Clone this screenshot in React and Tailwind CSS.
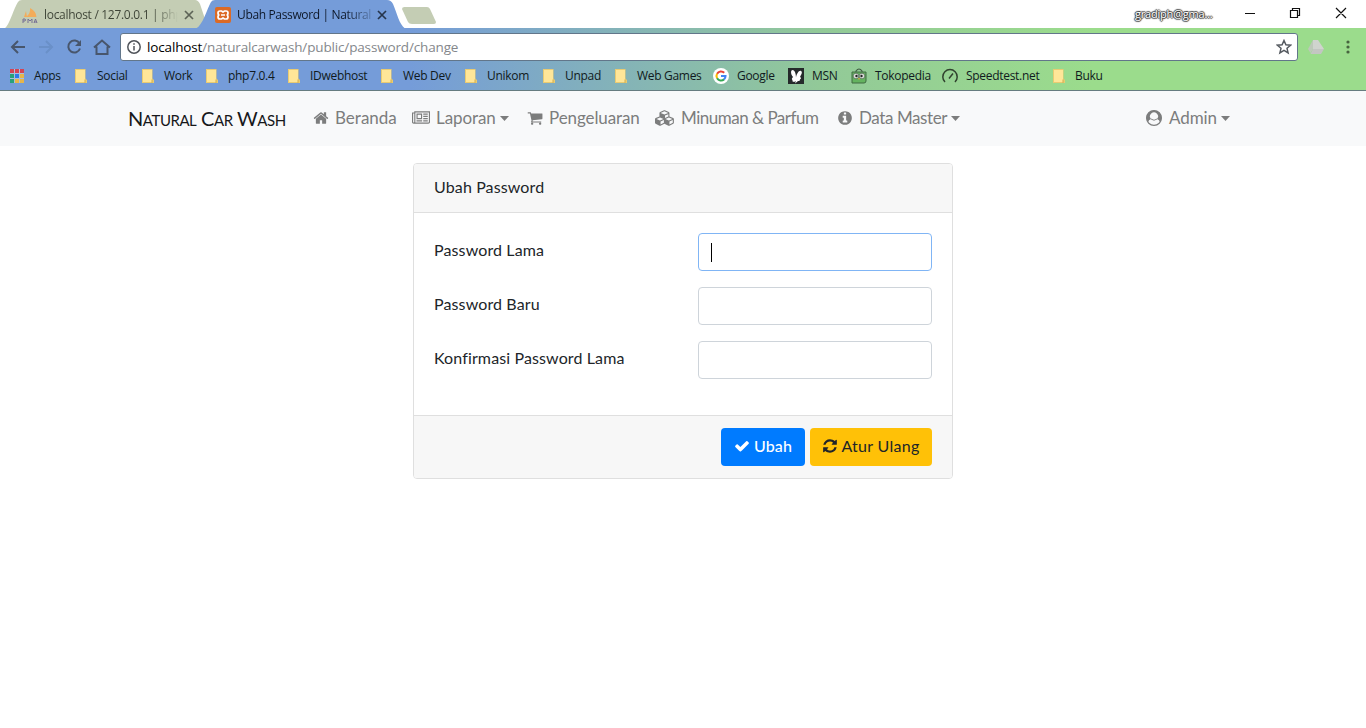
import React from "react";

const HOME = "M1472 992v480q0 26-19 45t-45 19h-384v-384h-256v384h-384q-26 0-45-19t-19-45v-480q0-1 .5-3t.5-3l575-474 575 474q1 2 1 6zm223-69l-62 74q-8 9-21 11h-3q-13 0-21-7l-692-577-692 577q-12 8-24 7-13-2-21-11l-62-74q-8-10-7-23.5t11-21.5l719-599q32-26 76-26t76 26l244 204v-195q0-14 9-23t23-9h192q14 0 23 9t9 23v408l219 182q10 8 11 21.5t-7 23.5z";
const NEWS = "M1024 512h-384v384h384v-384zm128 640v128h-640v-128h640zm0-768v640h-640v-640h640zm640 768v128h-512v-128h512zm0-256v128h-512v-128h512zm0-256v128h-512v-128h512zm0-256v128h-512v-128h512zm-1536 960v-960h-128v960q0 26 19 45t45 19 45-19 19-45zm1664 0v-1088h-1536v1088q0 33-11 64h1483q26 0 45-19t19-45zm128-1216v1216q0 80-56 136t-136 56h-1664q-80 0-136-56t-56-136v-1088h256v-128h1792z";
const CART = "M704 1536q0 52-38 90t-90 38-90-38-38-90 38-90 90-38 90 38 38 90zm896 0q0 52-38 90t-90 38-90-38-38-90 38-90 90-38 90 38 38 90zm128-1088v512q0 24-16.5 42.5t-40.5 21.5l-1044 122q13 60 13 70 0 16-24 64h920q26 0 45 19t19 45-19 45-45 19h-1024q-26 0-45-19t-19-45q0-11 8-31.5t16-36 21.5-40 15.5-29.5l-177-823h-204q-26 0-45-19t-19-45 19-45 45-19h256q16 0 28.5 6.5t19.5 15.5 13 24.5 8 26 5.5 29.5 4.5 26h1201q26 0 45 19t19 45z";
const CUBES = "M640 1632l384-192v-314l-384 164v342zm-64-454l404-173-404-173-404 173zm1088 454l384-192v-314l-384 164v342zm-64-454l404-173-404-173-404 173zm-448-293l384-165v-266l-384 164v267zm-64-379l441-189-441-189-441 189zm1088 518v416q0 36-19 67t-52 47l-448 224q-25 14-57 14t-57-14l-448-224q-4-2-7-4-2 2-7 4l-448 224q-25 14-57 14t-57-14l-448-224q-33-16-52-47t-19-67v-416q0-38 21.5-70t56.5-48l434-186v-400q0-38 21.5-70t56.5-48l448-192q23-10 50-10t50 10l448 192q35 16 56.5 48t21.5 70v400l434 186q36 16 57 48t21 70z";
const INFO = "M1152 1376v-160q0-14-9-23t-23-9h-96v-512q0-14-9-23t-23-9h-320q-14 0-23 9t-9 23v160q0 14 9 23t23 9h96v320h-96q-14 0-23 9t-9 23v160q0 14 9 23t23 9h448q14 0 23-9t9-23zm-128-896v-160q0-14-9-23t-23-9h-192q-14 0-23 9t-9 23v160q0 14 9 23t23 9h192q14 0 23-9t9-23zm640 416q0 209-103 385.5t-279.5 279.5-385.5 103-385.5-103-279.5-279.5-103-385.5 103-385.5 279.5-279.5 385.5-103 385.5 103 279.5 279.5 103 385.5z";
const CHECK = "M1671 566q0 40-28 68l-724 724-136 136q-28 28-68 28t-68-28l-136-136-362-362q-28-28-28-68t28-68l136-136q28-28 68-28t68 28l294 295 656-657q28-28 68-28t68 28l136 136q28 28 28 68z";
const REFRESH = "M1639 1056q0 5-1 7-64 268-268 434.5t-478 166.5q-146 0-282.5-55t-243.5-157l-129 129q-19 19-45 19t-45-19-19-45v-448q0-26 19-45t45-19h448q26 0 45 19t19 45-19 45l-137 137q71 66 161 102t187 36q134 0 250-65t186-179q11-17 53-117 8-23 30-23h192q13 0 22.5 9.5t9.5 22.5zm25-800v448q0 26-19 45t-45 19h-448q-26 0-45-19t-19-45 19-45l138-138q-148-137-349-137-134 0-250 65t-186 179q-11 17-53 117-8 23-30 23h-199q-13 0-22.5-9.5t-9.5-22.5v-7q65-268 270-434.5t480-166.5q146 0 284 55.5t245 156.5l130-129q19-19 45-19t45 19 19 45z";

function Glyph({ d, w = 1792, className = "" }) {
  return (
    <svg viewBox={`0 0 ${w} 1792`} className={`shrink-0 ${className}`} fill="currentColor">
      <path d={d} />
    </svg>
  );
}

function Caret() {
  return (
    <svg viewBox="0 0 10 5" className="ml-[4px] h-[5px] w-[9px] shrink-0" preserveAspectRatio="none" fill="currentColor">
      <path d="M0 0h10L5 5z" />
    </svg>
  );
}

function Close({ className }) {
  return (
    <svg viewBox="0 0 10 10" className={`h-[10px] w-[10px] shrink-0 ${className}`} fill="none" stroke="currentColor" strokeWidth="1.7">
      <path d="M1 1l8 8M9 1l-8 8" />
    </svg>
  );
}

function TabStrip() {
  return (
    <div className="relative h-7 bg-white text-[12px]">
      <svg className="absolute left-0 top-0" width="450" height="29" viewBox="0 0 450 29">
        <path d="M5 28C9 26 14 8 18 2Q19 0 22 0H195Q198 0 200 4L208 28Z" fill="#c4cdb4" />
        <path d="M196 28.500C203 25 207 9 211 2Q212 0 215 0H387Q391 0 393 4C397 13 399 24 405 28.500Z" fill="#759cd9" />
        <path d="M404.500 7H427Q429 7 430 9L436 22Q436 24 434 24H412Q409 24 408 22L402 9Q402 7 404.500 7Z" fill="#c4cdb4" />
      </svg>
      <div className="relative flex h-7 items-center">
        <svg viewBox="0 0 18 16" className="ml-[21px] mt-1 h-4 w-[18px] shrink-0">
          <path d="M9 0Q10 5 5 9L15.500 9Q15 3 9 0M5 3L3 9H6Z" fill="#f3ac5a" />
          <path d="M2 15v-4h2q1 1 0 2H2M7 15v-4l2 2 2-2v4M13 15l1.500-4 1.500 4M13 14h3" fill="none" stroke="#777095" strokeWidth="1" />
        </svg>
        <div className="ml-[5px] mt-[2px] w-[134px] whitespace-nowrap bg-gradient-to-r from-[#3d4336] from-80% to-[#c4cdb4] to-100% bg-clip-text tracking-[-0.3px] text-transparent">localhost / 127.0.0.1 | php</div>
        <Close className="ml-[6px] mt-[2px] text-[#5d6357]" />
        <svg viewBox="0 0 16 16" className="ml-[21px] mt-[2px] h-4 w-4 shrink-0">
          <rect width="16" height="16" rx="2" fill="#dc6a25" />
          <path d="M5 4h1.500L8 5l1.500-1H11Q13 4 13 6T11.500 8Q13 8 13 10T11 12H9.500L8 11 6.500 12H5Q3 12 3 10T4.500 8Q3 8 3 6T5 4ZM6 8h4" fill="none" stroke="#fff" strokeWidth="1.700" />
        </svg>
        <div className="ml-[6px] mt-[2px] w-[134px] whitespace-nowrap bg-gradient-to-r from-[#0d1728] from-80% to-[#759cd9] to-105% bg-clip-text tracking-[-0.35px] text-transparent">Ubah Password | Natural</div>
        <Close className="ml-[6px] mt-[2px] text-[#26354c]" />
        <div className="ml-[748px] w-[81px] whitespace-nowrap text-[11px] tracking-[-0.2px] text-white [text-shadow:-1px_0_1px_#333,1px_0_1px_#333,0_-1px_1px_#333,0_1px_1px_#333]">gradiph@gma...</div>
        <svg viewBox="0 0 104 12" className="-mt-[2px] ml-[29px] h-3 w-[104px] shrink-0" fill="none" stroke="#111" strokeWidth="1.200">
          <path d="M0 6.500h10M45.500 3.500h7v7h-7zM47.500 3.500v-2h7v7h-2M91 1l10 10M101 1l-10 10" />
        </svg>
      </div>
    </div>
  );
}

function Toolbar() {
  return (
    <div className="flex h-[34px] items-center pt-[3px] text-[#48566c]">
      <svg viewBox="0 0 112 18" className="ml-2 h-[18px] w-[112px] shrink-0" fill="none" stroke="currentColor" strokeWidth="2">
        <path d="M17 9H4M10 3L4 9l6 6" />
        <path d="M31 9h13M38 3l6 6-6 6" stroke="#6a90c8" />
        <path d="M71.500 5.500A6 6 0 1 0 72 10.500" />
        <path d="M73 2v6h-6z" fill="currentColor" stroke="none" />
        <path d="M86 9.500L94 2.500l8 7M88.500 8.500V16h11V8.500" />
      </svg>
      <div className="flex h-7 w-[1178px] items-center rounded-[3px] border border-[#62768a] bg-white">
        <svg viewBox="0 0 14 14" className="ml-[6px] h-[14px] w-[14px] shrink-0" fill="none" stroke="#50545a" strokeWidth="1.500">
          <circle cx="7" cy="7" r="6.200" />
          <path d="M7 6v4.500M7 3.200v1.600" />
        </svg>
        <div className="ml-[6px] mt-px flex-1 whitespace-nowrap text-[13.500px] tracking-[-0.150px] text-[#84878b]"><span className="text-black">localhost</span>/naturalcarwash/public/password/change</div>
        <svg viewBox="0 0 16 16" className="mr-[5px] h-4 w-4 shrink-0" fill="none" stroke="#555a60" strokeWidth="1.500">
          <path d="M8 1.500l1.900 4.300 4.700.4-3.600 3.100 1.100 4.600L8 11.400l-4.100 2.500L5 9.300 1.400 6.200l4.700-.4z" />
        </svg>
      </div>
      <svg viewBox="0 0 16 14" className="ml-[10px] h-[14px] w-4 shrink-0">
        <path d="M5 0h5L5 9 2.500 13 0 9z" fill="#bdc9b9" />
        <path d="M5 0h5l6 9H5z" fill="#d0d4ce" />
        <path d="M5 9h11l-3 5H2.500z" fill="#c3c6c2" />
      </svg>
      <svg viewBox="0 0 4 14" className="ml-[22px] h-[14px] w-1 shrink-0" fill="#47643f">
        <circle cx="2" cy="2" r="1.600" /><circle cx="2" cy="7" r="1.600" /><circle cx="2" cy="12" r="1.600" />
      </svg>
    </div>
  );
}

const ICONS = {
  apps: (
    <svg viewBox="0 0 14 14" className="h-[14px] w-[14px]">
      <path d="M0 0h4v4H0zM5 0h4v4H5zM10 0h4v4h-4z" fill="#d34456" />
      <path d="M0 5h4v4H0z" fill="#28a27a" /><path d="M5 5h4v4H5z" fill="#2e7be8" /><path d="M10 5h4v4h-4z" fill="#e6b54b" />
      <path d="M0 10h4v4H0z" fill="#28a27a" /><path d="M5 10h4v4H5zM10 10h4v4h-4z" fill="#e6b54b" />
      <path d="M4.500 0v14M9.500 0v14M0 4.500h14M0 9.500h14" stroke="#a9bfdc" />
    </svg>
  ),
  folder: (
    <svg viewBox="0 0 12 14" className="h-[14px] w-3">
      <path d="M0 0h10.500v9.500L12 11v3H0z" fill="#e9cb72" />
      <path d="M1 1h9v12H1z" fill="#ffe698" />
      <path d="M10 14v-3.500" stroke="#d2af52" />
    </svg>
  ),
  google: (
    <svg viewBox="0 0 16 16" className="h-4 w-4" fill="none" strokeWidth="2.100">
      <circle cx="8" cy="8" r="8" fill="#fff" />
      <path d="M11.200 4.800A4.500 4.500 0 0 0 4.100 5.800" stroke="#e94235" />
      <path d="M4.100 5.800A4.500 4.500 0 0 0 4.100 10.300" stroke="#fbbb05" />
      <path d="M4.100 10.300A4.500 4.500 0 0 0 11 11.400" stroke="#34a853" />
      <path d="M11 11.400A4.500 4.500 0 0 0 12.500 8H8" stroke="#4285f4" />
    </svg>
  ),
  msn: (
    <svg viewBox="0 0 16 16" className="h-4 w-4">
      <rect width="16" height="16" fill="#252a2b" />
      <path d="M8 13C6 14.500 4 14 4.500 12Q3 11 5 9C2.500 6 2.500 2 4.500 2S8 5 8 9.500C8.500 6 11 2 13 3S13 7 12 9Q14 10 12 11.500Q12 13.500 10 13L7 15.500Z" fill="#fff" />
    </svg>
  ),
  toko: (
    <svg viewBox="0 0 16 16" className="h-4 w-4">
      <path d="M5 4V3Q8-1 11 3v1" fill="none" stroke="#415b43" strokeWidth="1.200" />
      <path d="M1 4h14v9q0 2-2 2H1z" fill="#64b35f" stroke="#416b42" />
      <circle cx="5" cy="8" r="2.800" fill="#dce2da" stroke="#405343" strokeWidth=".6" /><circle cx="11" cy="8" r="2.800" fill="#dce2da" stroke="#405343" strokeWidth=".6" />
      <circle cx="5.500" cy="8" r="1.200" fill="#222" /><circle cx="10.500" cy="8" r="1.200" fill="#222" />
      <path d="M7 10h2l-1 2z" fill="#d9a43c" />
    </svg>
  ),
  speed: (
    <svg viewBox="0 0 16 16" className="h-4 w-4" fill="none" stroke="#30422e" strokeWidth="1.500">
      <path d="M3 14A7.200 7.200 0 1 1 13 14M7 10.500l4-5" />
    </svg>
  ),
};

const BOOKMARKS = [
  ["apps", "Apps", "ml-[10px] w-[24px]", "w-[41px]"],
  ["folder", "Social", "w-[22px]", "w-[45px]"],
  ["folder", "Work", "w-[22px]", "w-[42px]"],
  ["folder", "php7.0.4", "w-[22px]", "w-[60px]"],
  ["folder", "IDwebhost", "w-[22px]", "w-[71px]"],
  ["folder", "Web Dev", "w-[22px]", "w-[62px]"],
  ["folder", "Unikom", "w-[22px]", "w-[56px]"],
  ["folder", "Unpad", "w-[22px]", "w-[50px]"],
  ["folder", "Web Games", "w-[22px]", "w-[76px]"],
  ["google", "Google", "w-[24px]", "w-[51px]"],
  ["msn", "MSN", "w-[24px]", "w-[39px]"],
  ["toko", "Tokopedia", "w-[24px]", "w-[67px]"],
  ["speed", "Speedtest.net", "w-[24px]", "w-[87px]"],
  ["folder", "Buku", "w-[22px]", "w-[40px]"],
];

function Bookmarks() {
  return (
    <div className="flex h-[29px] items-center border-b border-[#667c80] text-[12px] text-[#101a20]">
      {BOOKMARKS.map(([icon, label, iconWidth, labelWidth]) => (
        <React.Fragment key={label}>
          <span className={`shrink-0 ${iconWidth}`}>{ICONS[icon]}</span>
          <span className={`shrink-0 whitespace-nowrap tracking-[-0.3px] ${labelWidth}`}>{label}</span>
        </React.Fragment>
      ))}
    </div>
  );
}

function NavItem({ icon, label, caret, className }) {
  return (
    <a className={`flex shrink-0 items-center whitespace-nowrap ${className}`}>
      {icon}
      <span className="ml-[6px]">{label}</span>
      {caret && <Caret />}
    </a>
  );
}

function Navbar() {
  return (
    <nav className="flex h-[55px] items-center bg-[#f8f9fa] pb-px pl-32 text-[17px] text-[#7c7d7d]">
      <a className="w-[185px] shrink-0 whitespace-nowrap text-[20px] tracking-[-0.45px] text-[#17181a]">
        N<span className="text-[15px]">ATURAL</span> C<span className="text-[15px]">AR</span> W<span className="text-[15px]">ASH</span>
      </a>
      <NavItem className="w-[99px]" icon={<Glyph d={HOME} className="h-4 w-4" />} label="Beranda" />
      <NavItem className="w-[115px] tracking-[-0.1px]" icon={<Glyph d={NEWS} w={2048} className="h-4 w-[18px]" />} label="Laporan" caret />
      <NavItem className="w-[128px] tracking-[-0.1px]" icon={<Glyph d={CART} className="h-4 w-4" />} label="Pengeluaran" />
      <NavItem className="w-[182px] tracking-[-0.5px]" icon={<Glyph d={CUBES} w={2304} className="h-4 w-5" />} label="Minuman & Parfum" />
      <NavItem className="w-[309px] tracking-[-0.4px]" icon={<Glyph d={INFO} className="h-4 w-4" />} label="Data Master" caret />
      <NavItem
        className="w-[90px] tracking-[-0.1px]"
        icon={
          <svg viewBox="0 0 16 16" className="mr-px h-4 w-4 shrink-0">
            <circle cx="8" cy="8" r="7.400" fill="none" stroke="currentColor" strokeWidth="1.200" />
            <path d="M2 12.500A7.500 7.500 0 1 1 14 12.500Q13.500 9.500 11 9A4 4 0 1 0 5 9Q2.500 9.500 2 12.500Z" fill="currentColor" />
            <path d="M5 9Q8 11.500 11 9" fill="none" stroke="currentColor" strokeWidth=".9" />
          </svg>
        }
        label="Admin"
        caret
      />
    </nav>
  );
}

function Field({ label, focused }) {
  return (
    <div className="flex h-[38px] justify-between">
      <label className="pt-[5px]">{label}</label>
      <div className={`flex h-[38px] w-[234px] items-center rounded-[4px] border bg-white pl-3 ${focused ? "border-[#80b5f5]" : "border-[#ced4da]"}`}>
        {focused && <span className="h-[19px] w-px bg-black" />}
      </div>
    </div>
  );
}

function PasswordCard() {
  return (
    <main className="mx-auto mt-[17px] flex h-[316px] w-[540px] flex-col overflow-hidden rounded-[4px] border border-[#dfdfdf] bg-white text-[16px] tracking-[0.12px] text-[#212529]">
      <div className="flex h-[49px] shrink-0 items-center border-b border-[#dfdfdf] bg-[#f7f7f7] px-5 pb-[2px]">Ubah Password</div>
      <div className="flex flex-1 flex-col gap-4 p-5">
        <Field label="Password Lama" focused />
        <Field label="Password Baru" />
        <Field label="Konfirmasi Password Lama" />
      </div>
      <div className="flex h-[63px] shrink-0 items-center justify-end gap-[5px] border-t border-[#dfdfdf] bg-[#f7f7f7] pr-5">
        <button className="flex h-[38px] w-[84px] items-center justify-center gap-1 rounded-[4px] bg-[#007bff] pb-[2px] font-medium text-white">
          <Glyph d={CHECK} className="h-4 w-4" />Ubah
        </button>
        <button className="flex h-[38px] w-[122px] items-center justify-center gap-[3px] rounded-[4px] bg-[#ffc107] pb-[2px] tracking-[0.3px] text-[#212529]">
          <Glyph d={REFRESH} className="h-4 w-4" />Atur Ulang
        </button>
      </div>
    </main>
  );
}

export default function App() {
  return (
    <div className="h-[728px] w-[1366px] overflow-hidden bg-white font-['Lato',sans-serif]">
      <header className="bg-[linear-gradient(90deg,#759cd9_0%,#759cd9_30%,#92c998_60%,#9bdc8c_80%,#9bdc8c_100%)] font-['Open_Sans',sans-serif]">
        <TabStrip />
        <Toolbar />
        <Bookmarks />
      </header>
      <Navbar />
      <PasswordCard />
    </div>
  );
}
